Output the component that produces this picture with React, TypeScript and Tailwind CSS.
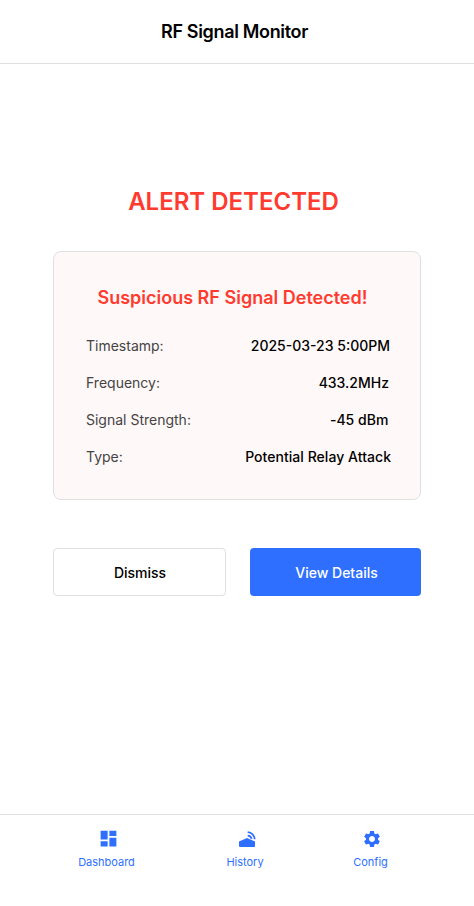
import React from "react";
import { MdDashboard, MdSettings } from "react-icons/md";

const rows = [
  { label: "Timestamp:", value: "2025-03-23 5:00PM", inset: "pr-[30px]", tracking: "" },
  { label: "Frequency:", value: "433.2MHz", inset: "pr-[31px]", tracking: "" },
  { label: "Signal Strength:", value: "-45 dBm", inset: "pr-[31.5px]", tracking: "tracking-[0.04px]" },
  { label: "Type:", value: "Potential Relay Attack", inset: "pr-[29px]", tracking: "tracking-[0.04px]" },
];

function HistoryIcon() {
  return (
    <svg width="20" height="20" viewBox="0 0 20 20" fill="none">
      <path d="M2 12.6 10 9.1l8 3.5v4.4q0 1-1 1H3q-1 0-1-1z" fill="currentColor" />
      <path d="M10.7 6.7a4.2 4.2 0 0 1 3.9 3.2M10.7 3.1a7.4 7.4 0 0 1 7 7.2" stroke="currentColor" strokeWidth="1.7" />
    </svg>
  );
}

export default function App() {
  return (
    <div className="flex h-[906px] w-[474px] flex-col bg-white font-['Inter',sans-serif] text-black">
      <header className="flex h-16 items-center justify-center border-b border-[#e0e0e0] pr-[5px]">
        <h1 className="text-lg font-semibold tracking-[-0.34px]">RF Signal Monitor</h1>
      </header>
      <main className="flex flex-1 flex-col px-[53px] pt-[120px]">
        <h2 className="pr-[7px] text-center text-2xl leading-9 font-semibold text-[#ff3b30]">ALERT DETECTED</h2>
        <section className="mt-[31px] h-[249px] w-[368px] rounded-lg border border-[#e0e0e0] bg-[#fff8f8] pt-8">
          <h3 className="pr-[9px] text-center text-lg leading-7 font-semibold text-[#ff3b30]">Suspicious RF Signal Detected!</h3>
          <dl className="mt-6 flex flex-col gap-[17px] text-sm leading-5">
            {rows.map((r) => (
              <div key={r.label} className={"flex justify-between pl-8 " + r.inset}>
                <dt className="text-[#444]">{r.label}</dt>
                <dd className={"font-medium " + r.tracking}>{r.value}</dd>
              </div>
            ))}
          </dl>
        </section>
        <div className="mt-12 flex gap-6 text-sm font-medium">
          <button className="h-12 w-[173px] rounded border border-[#e0e0e0] pt-0.5 pl-px">Dismiss</button>
          <button className="h-12 w-[171px] rounded bg-[#2e6fff] pt-0.5 pl-0.5 text-white">View Details</button>
        </div>
      </main>
      <nav className="flex h-[92px] border-t border-[#e0e0e0] pt-[14px] pl-[78px] text-[11px] leading-4 text-[#2e6fff]">
        <div className="flex w-[57px] flex-col items-center gap-[5px]">
          <div className="flex h-5 items-center pb-px pl-1"><MdDashboard size={21} /></div>
          Dashboard
        </div>
        <div className="ml-[91px] flex w-[38px] flex-col items-center gap-[5px]">
          <div className="pl-1"><HistoryIcon /></div>
          History
        </div>
        <div className="ml-[89px] flex w-[35px] flex-col items-center gap-[5px]">
          <div className="pl-[3px]"><MdSettings size={20} /></div>
          Config
        </div>
      </nav>
    </div>
  );
}
